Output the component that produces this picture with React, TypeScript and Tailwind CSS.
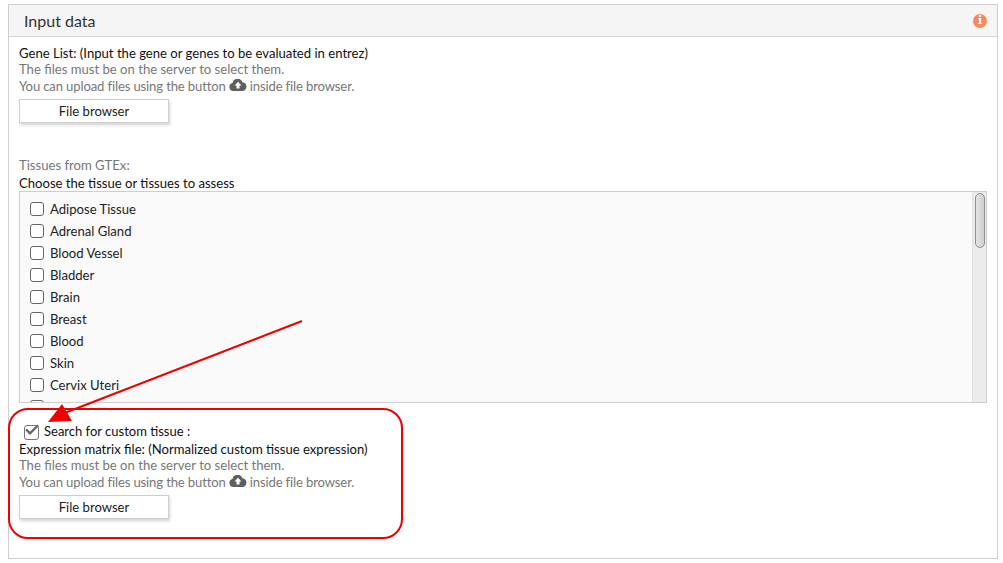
import { Check } from "lucide-react";

const tissues = [
  "Adipose Tissue",
  "Adrenal Gland",
  "Blood Vessel",
  "Bladder",
  "Brain",
  "Breast",
  "Blood",
  "Skin",
  "Cervix Uteri",
  "",
];

function CloudIcon() {
  return (
    <svg viewBox="0 0 24 16" className="inline-block w-[18px] h-[12px] mx-[3px] align-[0px]">
      <path
        fill="#5f5f5f"
        d="M6 16a5.5 5.5 0 0 1-1.4-10.8A7 7 0 0 1 18 4.2 6 6 0 0 1 18.5 16H6z"
      />
      <path fill="#fff" d="M12 3.6l4.6 5H14v4.2h-4V8.6H7.400z" />
    </svg>
  );
}

function FileBrowser() {
  return (
    <button className="block w-[150px] h-[24px] bg-white border border-[#cfcfcf] shadow-[1px_2px_3px_rgba(0,0,0,0.18)] text-[13.1px] leading-[20px] text-[#222]">
      File browser
    </button>
  );
}

function UploadHelp() {
  return (
    <div className="text-[#777] text-[13.1px]">
      <p className="leading-[16px] -mt-px">The files must be on the server to select them.</p>
      <p className="leading-[17px] mt-px tracking-[-0.14px]">
        You can upload files using the button
        <CloudIcon />
        inside file browser.
      </p>
    </div>
  );
}

export default function App() {
  return (
    <div className="relative w-[1003px] h-[563px] bg-white pt-1 pl-2 overflow-hidden font-['Lato',sans-serif] text-[#222]">
      {/* Panel */}
      <div className="w-[990px] h-[555px] border border-[#cfcfcf]">
        <div className="h-[32px] bg-[#f5f5f5] border-b border-[#d5d5d5] flex items-center justify-between pl-[15px] pr-[10px]">
          <h3 className="text-[16px] text-[#333]">Input data</h3>
          <span className="w-[14px] h-[14px] rounded-full bg-[#f58a5c] text-white flex items-center justify-center text-[11px] font-black font-['DejaVu_Serif',serif] leading-none">
            i
          </span>
        </div>

        <div className="pl-[10px] pr-[10px] pt-[8px]">
          <p className="text-[13.1px] leading-[17px] text-[#111]">Gene List: (Input the gene or genes to be evaluated in entrez)</p>
          <UploadHelp />
          <div className="mt-[4px]">
            <FileBrowser />
          </div>

          <p className="mt-[33px] text-[13.1px] leading-[18px] text-[#777]">Tissues from GTEx:</p>
          <p className="text-[13.1px] leading-[18px] text-[#111]">Choose the tissue or tissues to assess</p>

          {/* Tissue list */}
          <div className="mt-[-1px] w-[968px] h-[212px] border border-[#cfcfcf] bg-[#fafafa] flex overflow-hidden">
            <div className="flex-1 pl-[10px] pt-[6px]">
              {tissues.map((t, i) => (
                <div key={i} className="h-[22px] flex items-center gap-[6px] text-[13.1px] text-[#222]">
                  <span className="w-[14px] h-[14px] rounded-[3px] border-[1.5px] border-[#666] bg-white" />
                  <span className="pt-[2px]">{t}</span>
                </div>
              ))}
            </div>
            <div className="w-[14px] bg-[#ececec] border-l border-[#e2e2e2] pt-[1px] pl-[2px]">
              <div className="w-[10px] h-[55px] rounded-full border border-[#8f8f8f] bg-gradient-to-r from-[#e4e4e4] to-[#cfcfcf]" />
            </div>
          </div>

          {/* Custom tissue */}
          <div className="mt-[20px] pl-[5px] flex items-center gap-[5px] h-[18px] text-[13px] text-[#111]">
            <span className="relative w-[15px] h-[15px] rounded-[3px] border-[1.5px] border-[#777] bg-white">
              <Check size={16} strokeWidth={3.5} className="absolute left-[-1px] top-[-4px] text-[#666]" />
            </span>
            Search for custom tissue :
          </div>
          <p className="text-[13.1px] leading-[17px] text-[#111]">Expression matrix file: (Normalized custom tissue expression)</p>
          <UploadHelp />
          <div className="mt-[4px]">
            <FileBrowser />
          </div>
        </div>
      </div>

      {/* Red annotation */}
      <div className="absolute left-[8px] top-[408px] w-[395px] h-[131px] rounded-[20px] border-2 border-[#f00000]" />
      <svg className="absolute left-0 top-0 pointer-events-none" width="1003" height="563">
        <line x1="302" y1="321" x2="62" y2="414" stroke="#f00000" strokeWidth="2" />
        <polygon points="48,422 62,404 72,421" fill="#f00000" />
      </svg>
    </div>
  );
}
